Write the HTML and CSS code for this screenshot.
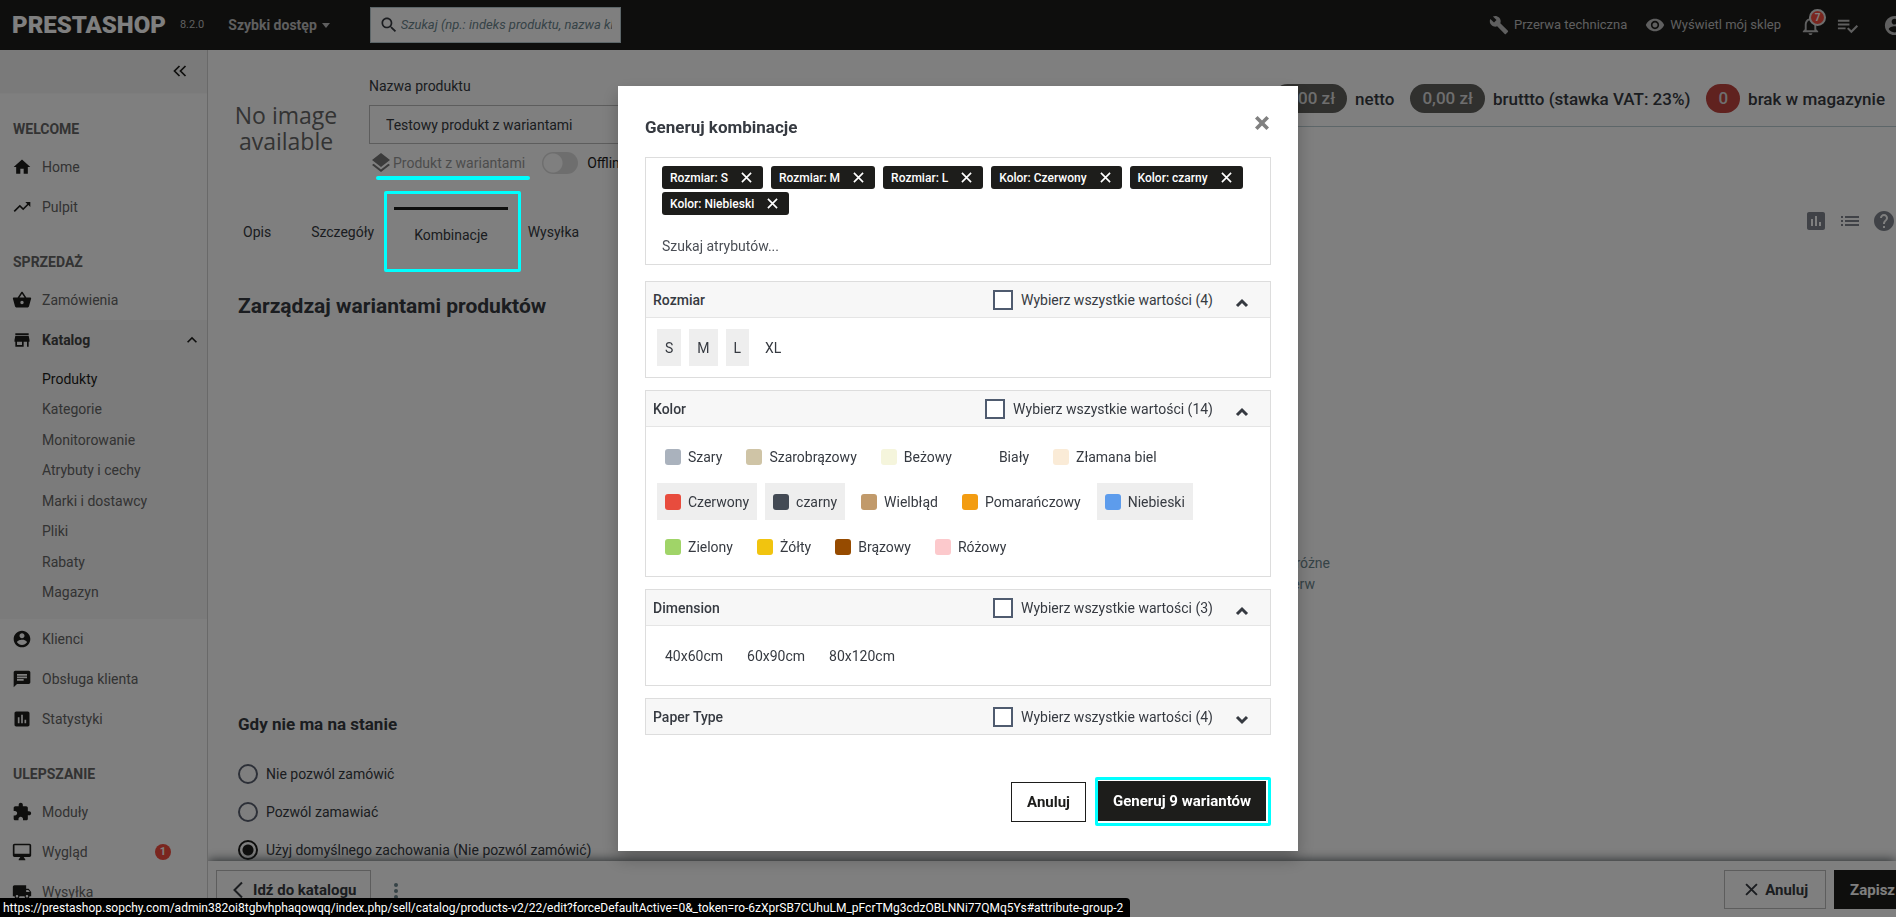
FILE: index.html
```
<!DOCTYPE html>
<html lang="pl">
<head>
<meta charset="utf-8">
<title>Produkty • PrestaShop</title>
<link rel="stylesheet" href="styles.css">
</head>
<body>
<svg class="sprite" aria-hidden="true">
  <symbol id="i-home" viewBox="0 0 24 24"><path d="M10 20v-6h4v6h5v-8h3L12 3 2 12h3v8z"/></symbol>
  <symbol id="i-trend" viewBox="0 0 24 24"><path d="M16 6l2.29 2.29-4.88 4.88-4-4L2 16.59 3.41 18l6-6 4 4 6.3-6.29L22 12V6z"/></symbol>
  <symbol id="i-basket" viewBox="0 0 24 24"><path d="M17.21 9l-4.38-6.56c-.19-.28-.51-.42-.83-.42-.32 0-.64.14-.83.43L6.79 9H2c-.55 0-1 .45-1 1 0 .09.01.18.04.27l2.54 9.27c.23.84 1 1.46 1.92 1.46h13c.92 0 1.69-.62 1.93-1.46l2.54-9.27L23 10c0-.55-.45-1-1-1h-4.79zM9 9l3-4.4L15 9H9zm3 8c-1.1 0-2-.9-2-2s.9-2 2-2 2 .9 2 2-.9 2-2 2z"/></symbol>
  <symbol id="i-store" viewBox="0 0 24 24"><path d="M20 4H4v2h16V4zm1 10v-2l-1-5H4l-1 5v2h1v6h10v-6h4v6h2v-6h1zm-9 4H6v-4h6v4z"/></symbol>
  <symbol id="i-account" viewBox="0 0 24 24"><path d="M12 2C6.48 2 2 6.48 2 12s4.48 10 10 10 10-4.48 10-10S17.52 2 12 2zm0 3c1.66 0 3 1.34 3 3s-1.34 3-3 3-3-1.34-3-3 1.34-3 3-3zm0 14.2c-2.5 0-4.71-1.28-6-3.22.03-1.99 4-3.08 6-3.08 1.99 0 5.97 1.09 6 3.08-1.29 1.94-3.5 3.22-6 3.22z"/></symbol>
  <symbol id="i-chat" viewBox="0 0 24 24"><path d="M20 2H4c-1.1 0-1.99.9-1.99 2L2 22l4-4h14c1.1 0 2-.9 2-2V4c0-1.1-.9-2-2-2zM6 9h12v2H6V9zm8 5H6v-2h8v2zm4-6H6V6h12v2z"/></symbol>
  <symbol id="i-chart" viewBox="0 0 24 24"><path d="M19 3H5c-1.1 0-2 .9-2 2v14c0 1.1.9 2 2 2h14c1.1 0 2-.9 2-2V5c0-1.1-.9-2-2-2zM9 17H7v-7h2v7zm4 0h-2V7h2v10zm4 0h-2v-4h2v4z"/></symbol>
  <symbol id="i-module" viewBox="0 0 24 24"><path d="M20.5 11H19V7c0-1.1-.9-2-2-2h-4V3.5C13 2.12 11.88 1 10.5 1S8 2.12 8 3.5V5H4c-1.1 0-1.99.9-1.99 2v3.8H3.5c1.49 0 2.7 1.21 2.7 2.7s-1.21 2.7-2.7 2.7H2V20c0 1.1.9 2 2 2h3.8v-1.5c0-1.49 1.21-2.7 2.7-2.7 1.49 0 2.7 1.21 2.7 2.7V22H17c1.1 0 2-.9 2-2v-4h1.5c1.38 0 2.5-1.12 2.5-2.5S21.88 11 20.5 11z"/></symbol>
  <symbol id="i-desktop" viewBox="0 0 24 24"><path d="M21 2H3c-1.1 0-2 .9-2 2v12c0 1.1.9 2 2 2h7l-2 3v1h8v-1l-2-3h7c1.1 0 2-.9 2-2V4c0-1.1-.9-2-2-2zm0 12H3V4h18v10z"/></symbol>
  <symbol id="i-truck" viewBox="0 0 24 24"><path d="M20 8h-3V4H3c-1.1 0-2 .9-2 2v11h2c0 1.66 1.34 3 3 3s3-1.34 3-3h6c0 1.66 1.34 3 3 3s3-1.34 3-3h2v-5l-3-4zM6 18.5c-.83 0-1.5-.67-1.5-1.5s.67-1.5 1.5-1.5 1.5.67 1.5 1.5-.67 1.5-1.5 1.5zm13.5-9l1.96 2.5H17V9.5h2.5zm-1.5 9c-.83 0-1.5-.67-1.5-1.5s.67-1.5 1.5-1.5 1.5.67 1.5 1.5-.67 1.5-1.5 1.5z"/></symbol>
  <symbol id="i-wrench" viewBox="0 0 24 24"><path d="M22.7 19l-9.1-9.1c.9-2.3.4-5-1.5-6.9-2-2-5-2.4-7.4-1.3L9 6 6 9 1.6 4.7C.4 7.1.9 10.1 2.9 12.1c1.9 1.9 4.6 2.4 6.9 1.5l9.1 9.1c.4.4 1 .4 1.4 0l2.3-2.3c.5-.4.5-1.1.1-1.4z"/></symbol>
  <symbol id="i-eye" viewBox="0 0 24 24"><path d="M12 4.5C7 4.5 2.73 7.61 1 12c1.73 4.39 6 7.5 11 7.5s9.27-3.11 11-7.5c-1.73-4.39-6-7.5-11-7.5zM12 17c-2.76 0-5-2.24-5-5s2.24-5 5-5 5 2.24 5 5-2.24 5-5 5zm0-8c-1.66 0-3 1.34-3 3s1.34 3 3 3 3-1.34 3-3-1.34-3-3-3z"/></symbol>
  <symbol id="i-bell" viewBox="0 0 24 24"><path d="M12 22c1.1 0 2-.9 2-2h-4c0 1.1.9 2 2 2zm6-6v-5c0-3.07-1.63-5.64-4.5-6.32V4c0-.83-.67-1.5-1.5-1.5s-1.5.67-1.5 1.5v.68C7.64 5.36 6 7.92 6 11v5l-2 2v1h16v-1l-2-2zm-2 1H8v-6c0-2.48 1.51-4.5 4-4.5s4 2.02 4 4.5v6z"/></symbol>
  <symbol id="i-playlist" viewBox="0 0 24 24"><path d="M14 10H2v2h12v-2zm0-4H2v2h12V6zM2 16h8v-2H2v2zm19.5-4.5L23 13l-6.99 7-4.51-4.5L13 14l3.01 3 5.49-5.5z"/></symbol>
  <symbol id="i-search" viewBox="0 0 24 24"><path d="M15.5 14h-.79l-.28-.27C15.41 12.59 16 11.11 16 9.5 16 5.91 13.09 3 9.5 3S3 5.91 3 9.5 5.91 16 9.5 16c1.61 0 3.09-.59 4.23-1.57l.27.28v.79l5 4.99L20.49 19l-4.99-5zm-6 0C7.01 14 5 11.99 5 9.5S7.01 5 9.5 5 14 7.01 14 9.5 11.99 14 9.5 14z"/></symbol>
  <symbol id="i-layers" viewBox="0 0 24 24"><path d="M11.99 18.54l-7.37-5.73L3 14.07l9 7 9-7-1.63-1.27-7.38 5.74zM12 16l7.36-5.73L21 9l-9-7-9 7 1.63 1.27L12 16z"/></symbol>
  <symbol id="i-list" viewBox="0 0 24 24"><path d="M3 13h2v-2H3v2zm0 4h2v-2H3v2zm0-8h2V7H3v2zm4 4h14v-2H7v2zm0 4h14v-2H7v2zM7 7v2h14V7H7z"/></symbol>
  <symbol id="i-help" viewBox="0 0 24 24"><path d="M12 2C6.48 2 2 6.48 2 12s4.48 10 10 10 10-4.48 10-10S17.52 2 12 2zm1 17h-2v-2h2v2zm2.07-7.75l-.9.92C13.45 12.9 13 13.5 13 15h-2v-.5c0-1.1.45-2.1 1.17-2.83l1.24-1.26c.37-.36.59-.86.59-1.41 0-1.1-.9-2-2-2s-2 .9-2 2H8c0-2.21 1.79-4 4-4s4 1.79 4 4c0 .88-.36 1.68-.93 2.25z"/></symbol>
  <symbol id="i-collapse" viewBox="0 0 14 12"><path d="M6.5 1 1.5 6l5 5M12.500 1 7.500 6l5 5" fill="none" stroke="currentColor" stroke-width="1.700"/></symbol>
  <symbol id="i-up" viewBox="0 0 24 24"><path d="M12 8l-6 6 1.410 1.410L12 10.830l4.590 4.580L18 14z"/></symbol>
  <symbol id="i-chev" viewBox="0 0 14 10"><path d="M2 8l5-5 5 5" fill="none" stroke="currentColor" stroke-width="3"/></symbol>
  <symbol id="i-back" viewBox="0 0 10 18"><path d="M9 1.500 1.500 9 9 16.500" fill="none" stroke="currentColor" stroke-width="2"/></symbol>
  <symbol id="i-x" viewBox="0 0 12 12"><path d="M1 1l10 10M11 1 1 11" fill="none" stroke="currentColor" stroke-width="1.800"/></symbol>
</svg>

<div class="app">
  <header class="topbar">
    <a class="logo" href="#">PRESTASHOP</a>
    <span class="version">8.2.0</span>
    <button class="quick" type="button">Szybki dostęp</button>
    <label class="search">
      <svg><use href="#i-search"/></svg>
      <input type="text" aria-label="Szukaj" placeholder="Szukaj (np.: indeks produktu, nazwa klienta)">
    </label>
    <nav class="toplinks">
      <a class="toplink" href="#"><svg><use href="#i-wrench"/></svg>Przerwa techniczna</a>
      <a class="toplink" href="#"><svg><use href="#i-eye"/></svg>Wyświetl mój sklep</a>
      <button class="topicon bell" type="button" aria-label="Powiadomienia"><svg><use href="#i-bell"/></svg><span class="count">7</span></button>
      <button class="topicon" type="button" aria-label="Zadania"><svg><use href="#i-playlist"/></svg></button>
      <button class="topicon user" type="button" aria-label="Konto"><svg><use href="#i-account"/></svg></button>
    </nav>
  </header>

  <div class="body">
    <aside class="sidebar">
      <div class="fold"><button type="button" aria-label="Zwiń menu"><svg><use href="#i-collapse"/></svg></button></div>
      <h4 class="nav-title">WELCOME</h4>
      <a class="nav-item" href="#"><svg><use href="#i-home"/></svg>Home</a>
      <a class="nav-item" href="#"><svg><use href="#i-trend"/></svg>Pulpit</a>
      <h4 class="nav-title">SPRZEDAŻ</h4>
      <a class="nav-item" href="#"><svg><use href="#i-basket"/></svg>Zamówienia</a>
      <div class="nav-open">
        <a class="nav-item current" href="#"><svg><use href="#i-store"/></svg>Katalog<svg class="arrow"><use href="#i-up"/></svg></a>
        <div class="subnav">
          <a class="on" href="#">Produkty</a>
          <a href="#">Kategorie</a>
          <a href="#">Monitorowanie</a>
          <a href="#">Atrybuty i cechy</a>
          <a href="#">Marki i dostawcy</a>
          <a href="#">Pliki</a>
          <a href="#">Rabaty</a>
          <a href="#">Magazyn</a>
        </div>
      </div>
      <a class="nav-item" href="#"><svg><use href="#i-account"/></svg>Klienci</a>
      <a class="nav-item" href="#"><svg><use href="#i-chat"/></svg>Obsługa klienta</a>
      <a class="nav-item" href="#"><svg><use href="#i-chart"/></svg>Statystyki</a>
      <h4 class="nav-title">ULEPSZANIE</h4>
      <a class="nav-item" href="#"><svg><use href="#i-module"/></svg>Moduły</a>
      <a class="nav-item" href="#"><svg><use href="#i-desktop"/></svg>Wygląd<span class="badge">1</span></a>
      <a class="nav-item" href="#"><svg><use href="#i-truck"/></svg>Wysyłka</a>
    </aside>

    <main class="main">
      <div class="content">
        <section class="product">
          <div class="preview">No image available</div>
          <div class="naming">
            <label for="name">Nazwa produktu</label>
            <input id="name" type="text" value="Testowy produkt z wariantami">
            <div class="status">
              <svg><use href="#i-layers"/></svg>
              <span class="kind">Produkt z wariantami</span>
              <label class="online"><input type="checkbox" role="switch">Offline</label>
            </div>
          </div>
          <div class="summary">
            <span class="pill">0,00 zł</span>netto
            <span class="pill">0,00 zł</span>bruttto (stawka VAT: 23%)
            <span class="pill red">0</span>brak w magazynie
          </div>
        </section>

        <div class="tabrow">
          <nav class="tabs">
            <a href="#">Opis</a>
            <a href="#">Szczegóły</a>
            <a class="active" href="#">Kombinacje</a>
            <a href="#">Wysyłka</a>
          </nav>
          <div class="tools">
            <button type="button" aria-label="Statystyki"><svg><use href="#i-chart"/></svg></button>
            <button type="button" aria-label="Lista"><svg><use href="#i-list"/></svg></button>
            <button type="button" aria-label="Pomoc"><svg><use href="#i-help"/></svg></button>
          </div>
        </div>

        <h2>Zarządzaj wariantami produktów</h2>
        <div class="empty"><p>przyjmujące różne</p><p class="second">musisz najpierw</p></div>

        <h3>Gdy nie ma na stanie</h3>
        <div class="radios">
          <label><input type="radio" name="oos">Nie pozwól zamówić</label>
          <label><input type="radio" name="oos">Pozwól zamawiać</label>
          <label><input type="radio" name="oos" checked>Użyj domyślnego zachowania (Nie pozwól zamówić)</label>
        </div>
      </div>

      <footer class="actions">
        <a class="btn back" href="#"><svg><use href="#i-back"/></svg>Idź do katalogu</a>
        <button class="dots" type="button" aria-label="Więcej"><i></i><i></i><i></i></button>
        <button class="btn cancel" type="button"><svg><use href="#i-x"/></svg>Anuluj</button>
        <button class="btn save" type="button">Zapisz</button>
      </footer>
    </main>
  </div>
</div>

<div class="backdrop">
  <div class="modal" role="dialog" aria-modal="true" aria-labelledby="modal-title">
    <div class="modal-head">
      <h1 id="modal-title">Generuj kombinacje</h1>
      <button class="close" type="button" aria-label="Zamknij"><svg viewBox="0 0 14 14"><path d="M2 2l10 10M12 2 2 12" fill="none" stroke="currentColor" stroke-width="3.200"/></svg></button>
    </div>

    <div class="picker">
      <div class="chips">
        <span class="chip">Rozmiar: S<button type="button" aria-label="Usuń"><svg><use href="#i-x"/></svg></button></span>
        <span class="chip">Rozmiar: M<button type="button" aria-label="Usuń"><svg><use href="#i-x"/></svg></button></span>
        <span class="chip">Rozmiar: L<button type="button" aria-label="Usuń"><svg><use href="#i-x"/></svg></button></span>
        <span class="chip">Kolor: Czerwony<button type="button" aria-label="Usuń"><svg><use href="#i-x"/></svg></button></span>
        <span class="chip">Kolor: czarny<button type="button" aria-label="Usuń"><svg><use href="#i-x"/></svg></button></span>
        <span class="chip">Kolor: Niebieski<button type="button" aria-label="Usuń"><svg><use href="#i-x"/></svg></button></span>
      </div>
      <input type="text" aria-label="Szukaj atrybutów" placeholder="Szukaj atrybutów...">
    </div>

    <div class="groups">
      <section class="group">
        <div class="group-head"><h5>Rozmiar</h5><label><input type="checkbox">Wybierz wszystkie wartości (4)</label><button type="button" aria-label="Zwiń"><svg><use href="#i-chev"/></svg></button></div>
        <div class="values">
          <button class="value on" type="button">S</button>
          <button class="value on" type="button">M</button>
          <button class="value on" type="button">L</button>
          <button class="value" type="button">XL</button>
        </div>
      </section>

      <section class="group">
        <div class="group-head"><h5>Kolor</h5><label><input type="checkbox">Wybierz wszystkie wartości (14)</label><button type="button" aria-label="Zwiń"><svg><use href="#i-chev"/></svg></button></div>
        <div class="values">
          <button class="value" type="button"><i style="background:#aab2bd"></i>Szary</button>
          <button class="value" type="button"><i style="background:#cfc4a6"></i>Szarobrązowy</button>
          <button class="value" type="button"><i style="background:#f5f5dc"></i>Beżowy</button>
          <button class="value" type="button"><i style="background:#ffffff"></i>Biały</button>
          <button class="value" type="button"><i style="background:#faebd7"></i>Złamana biel</button>
          <button class="value on" type="button"><i style="background:#e84c3d"></i>Czerwony</button>
          <button class="value on" type="button"><i style="background:#434a54"></i>czarny</button>
          <button class="value" type="button"><i style="background:#c19a6b"></i>Wielbłąd</button>
          <button class="value" type="button"><i style="background:#f39c11"></i>Pomarańczowy</button>
          <button class="value on" type="button"><i style="background:#5d9cec"></i>Niebieski</button>
          <button class="value" type="button"><i style="background:#a0d468"></i>Zielony</button>
          <button class="value" type="button"><i style="background:#f1c40f"></i>Żółty</button>
          <button class="value" type="button"><i style="background:#964b00"></i>Brązowy</button>
          <button class="value" type="button"><i style="background:#fcc9cc"></i>Różowy</button>
        </div>
      </section>

      <section class="group">
        <div class="group-head"><h5>Dimension</h5><label><input type="checkbox">Wybierz wszystkie wartości (3)</label><button type="button" aria-label="Zwiń"><svg><use href="#i-chev"/></svg></button></div>
        <div class="values">
          <button class="value" type="button">40x60cm</button>
          <button class="value" type="button">60x90cm</button>
          <button class="value" type="button">80x120cm</button>
        </div>
      </section>

      <section class="group closed">
        <div class="group-head"><h5>Paper Type</h5><label><input type="checkbox">Wybierz wszystkie wartości (4)</label><button type="button" aria-label="Rozwiń"><svg><use href="#i-chev"/></svg></button></div>
      </section>
    </div>

    <div class="modal-foot">
      <button class="mbtn" type="button">Anuluj</button>
      <span class="marked"><button class="mbtn dark" type="button">Generuj 9 wariantów</button></span>
    </div>
  </div>
</div>

<div class="mark underline"></div>
<div class="mark frame"></div>
<div class="statusbar">https://prestashop.sopchy.com/admin382oi8tgbvhphaqowqq/index.php/sell/catalog/products-v2/22/edit?forceDefaultActive=0&amp;_token=ro-6zXprSB7CUhuLM_pFcrTMg3cdzOBLNNi77QMq5Ys#attribute-group-2</div>
</body>
</html>
```
FILE: styles.css
```
* { box-sizing: border-box; }
html, body { height: 100%; margin: 0; overflow: hidden; }
body { font: 14px/20px Roboto, "Open Sans", sans-serif; color: #363a41; background: #fff; }
h1, h2, h3, h4, h5, p { margin: 0; }
a { color: inherit; text-decoration: none; }
button, input { font: inherit; color: inherit; }
button { border: 0; padding: 0; background: none; cursor: pointer; }
input { outline: 0; margin: 0; }
svg { display: block; flex: none; width: 20px; height: 20px; fill: currentColor; }
.sprite { position: absolute; width: 0; height: 0; }

.app { display: flex; flex-direction: column; height: 100vh; overflow: hidden; }
.body { display: flex; flex: 1; min-height: 0; }

/* Top bar */
.topbar { display: flex; align-items: center; flex: none; height: 50px; padding-left: 12px; overflow: hidden; background: #1d1d1b; color: #bebebe; }
.logo { color: #fff; font-size: 24px; font-weight: 900; }
.version { margin-left: 14px; font-size: 11px; }
.quick { display: flex; align-items: center; gap: 5px; margin-left: 24px; font-weight: 700; }
.quick::after { content: ""; border: 4px solid transparent; border-top: 5px solid currentColor; border-bottom: 0; }
.search { display: flex; align-items: center; gap: 2px; width: 251px; height: 36px; margin-left: 40px; padding: 0 8px; background: #fff; border: 1px solid #bbcdd2; color: #363a41; }
.search input { flex: 1; min-width: 0; border: 0; padding: 0; background: none; font-size: 13px; font-style: italic; }
.search input::placeholder { color: #6c868e; opacity: 1; }
.toplinks { display: flex; align-items: center; margin: 0 -10px 0 auto; }
.toplink { display: flex; align-items: center; gap: 5px; margin-right: 18px; font-size: 13px; }
.topicon { position: relative; margin-right: 14px; }
.topicon svg { width: 23px; height: 23px; }
.topicon.user { margin: 0 0 0 10px; }
.count { position: absolute; top: -5px; right: -4px; width: 17px; height: 17px; border: 2px solid #ddd; border-radius: 50%; background: #f54c3e; color: #fff; font-size: 10px; line-height: 13px; font-weight: 700; }

/* Side menu */
.sidebar { flex: none; width: 208px; overflow: hidden; border-right: 1px solid #d3d3d3; color: #666; }
.fold { display: flex; align-items: center; justify-content: flex-end; height: 44px; padding: 0 20px 2px 0; background: #f4f4f4; color: #1d1d1b; border-bottom: 1px solid #fafafa; }
.fold svg { width: 14px; height: 12px; }
.nav-title { height: 36px; margin-top: 17px; padding-left: 13px; font-size: 14px; line-height: 36px; font-weight: 700; }
.nav-item { display: flex; align-items: center; gap: 10px; height: 40px; padding: 0 5px 0 12px; }
.nav-item svg { color: #1d1d1b; }
.nav-item .arrow { margin-left: auto; width: 20px; height: 20px; }
.nav-open { background: #f6f6f6; }
.current { color: #444; font-weight: 700; }
.subnav { display: flex; flex-direction: column; justify-content: space-between; height: 259px; padding: 9px 0 17px 42px; }
.subnav .on { color: #1d1d1b; }
.badge { margin: 0 31px 0 auto; width: 16px; height: 16px; border-radius: 50%; background: #f54c3e; color: #fff; font-size: 11px; line-height: 16px; font-weight: 700; text-align: center; }

/* Product page */
.main { display: flex; flex-direction: column; flex: 1; min-width: 0; }
.content { flex: 1; min-height: 0; overflow: hidden; }
.product { display: flex; padding: 26px 0 0 25px; }
.preview { flex: none; width: 106px; margin: 26px 30px 0 0; font: 23px/26px "Open Sans", sans-serif; color: #666; text-align: center; }
.naming { flex: none; width: 500px; }
.naming > label { display: block; }
.naming > input { display: block; width: 100%; height: 39px; margin-top: 9px; padding: 0 16px; border: 1px solid #bbb; background: #fff; }
.status { display: flex; align-items: center; height: 22px; margin-top: 8px; }
.status svg { width: 24px; height: 24px; color: #777; }
.kind { color: #999; }
.online { display: flex; align-items: center; gap: 9px; margin-left: 17px; color: #1d1d1b; }
.online input { appearance: none; width: 36px; height: 22px; border-radius: 11px; background: radial-gradient(circle at 11px 11px, #fff 9px, #ddd 10px); }
.summary { display: flex; align-items: center; align-self: flex-start; gap: 8px; margin-left: auto; padding: 8px 11px 13px 0; border-bottom: 1px solid #bbcdd2; font-size: 17px; font-weight: 500; white-space: nowrap; }
.pill { height: 29px; padding: 0 12px; border-radius: 15px; background: #60605c; color: #ddd; line-height: 29px; }
.pill:not(:first-child) { margin-left: 8px; }
.pill.red { background: #c0443f; }
.tabrow { display: flex; justify-content: space-between; margin-top: 33px; padding-left: 15px; }
.tabs { display: flex; height: 53px; }
.tabs a { padding: 15px 20px; }
.tabs .active { border-top: 3px solid #1d1d1b; }
.tools { display: flex; align-items: flex-start; gap: 10px; padding-top: 2px; color: #80858e; }
.tools svg { width: 24px; height: 24px; }
h2 { margin: 32px 0 0 30px; font-size: 21px; line-height: 28px; font-weight: 700; }
h3 { margin: 117px 0 0 30px; font-size: 17px; line-height: 24px; font-weight: 700; }
.empty { width: 536px; margin: 233px 0 0 586px; line-height: 21px; color: #6c868e; text-align: right; }
.second { padding-right: 15px; }
.radios { margin: 19px 0 0 30px; }
.radios label { display: flex; align-items: center; gap: 8px; height: 38px; }
.radios input { appearance: none; width: 20px; height: 20px; border: 2px solid #5a6070; border-radius: 50%; background: #fff; }
.radios input:checked { border-color: #1d1d1b; background: radial-gradient(circle, #1d1d1b 5px, #fff 6px); }

.actions { display: flex; align-items: flex-start; flex: none; position: relative; height: 56px; padding: 9px 0 0 8px; background: #fff; box-shadow: 0 -1px 10px rgba(40, 50, 55, .8); clip-path: inset(-20px 0 0 0); }
.btn { display: flex; align-items: center; height: 39px; border: 1px solid #bbb; font-size: 15px; font-weight: 700; background: #fff; }
.back { gap: 10px; width: 155px; padding-left: 16px; }
.back svg { width: 10px; height: 18px; }
.dots { display: flex; flex-direction: column; gap: 2px; margin: 13px 0 0 23px; }
.dots i { width: 4px; height: 4px; border-radius: 50%; background: #6c868e; }
.cancel { gap: 7px; margin-left: auto; padding: 0 17px 0 20px; }
.cancel svg { width: 13px; height: 13px; }
.save { margin-left: 8px; padding: 0 1px 0 16px; background: #1d1d1b; border: 0; color: #fff; }

/* Combination generator */
.backdrop { position: fixed; inset: 0; display: flex; align-items: flex-start; justify-content: center; padding: 86px 0 0 20px; background: rgba(0, 0, 0, .5); }
.modal { width: 680px; padding: 27px 27px 25px; background: #fff; box-shadow: 0 8px 16px rgba(0, 0, 0, .25); }
.modal-head { display: flex; justify-content: space-between; height: 28px; }
.modal-head h1 { font-size: 17px; line-height: 28px; font-weight: 700; }
.close { align-self: flex-start; margin: 2px 1px 0 0; color: #808080; }
.close svg { width: 16px; height: 16px; }
.picker { margin-top: 16px; padding: 8px 16px 8px; border: 1px solid #ddd; }
.chips { display: flex; flex-wrap: wrap; gap: 3px 8px; }
.chip { display: flex; align-items: center; gap: 13px; height: 23px; padding: 0 11px 0 8px; border-radius: 3px; background: #1d1d1b; color: #fff; font-size: 12px; font-weight: 500; }
.chip svg { width: 11px; height: 11px; }
.picker > input { display: block; width: 100%; height: 20px; margin-top: 21px; border: 0; padding: 0; }
.picker > input::placeholder { color: #4a4e55; opacity: 1; }

.groups { display: grid; gap: 12px; margin-top: 16px; }
.group { border: 1px solid #ddd; }
.group-head { display: flex; align-items: center; height: 36px; padding: 0 21px 0 7px; background: #f7f7f7; border-bottom: 1px solid #e5e5e5; }
.group-head h5 { flex: 1; font-size: 14px; line-height: 20px; font-weight: 500; }
.group-head label { display: flex; align-items: center; gap: 8px; }
.group-head input { appearance: none; width: 20px; height: 20px; border: 2px solid #4f5b6f; background: #fff; }
.group-head button { margin: 6px 0 0 22px; }
.group-head svg { width: 14px; height: 10px; }
.closed .group-head { height: 35px; border-bottom: 0; }
.closed svg { transform: rotate(180deg); }
.values { display: flex; flex-wrap: wrap; gap: 8px; padding: 11px; }
.value { display: flex; align-items: center; gap: 7px; height: 37px; padding: 0 8px; }
.value.on { background: #eee; }
.value i { width: 16px; height: 16px; border-radius: 3px; }

.modal-foot { display: flex; align-items: center; justify-content: flex-end; gap: 9px; margin-top: 42px; }
.mbtn { height: 40px; padding: 0 15px; border: 1px solid #1d1d1b; background: #fff; color: #1d1d1b; font-size: 15px; font-weight: 700; }
.mbtn.dark { padding: 0 14px; background: #1d1d1b; color: #fff; }
.marked { display: flex; padding: 1px 2px 2px 0; border: 3px solid #0ff; border-radius: 2px; }

/* Highlight marks and browser status bubble */
.mark { position: fixed; pointer-events: none; }
.underline { left: 376px; top: 176px; width: 154px; height: 4px; border-radius: 2px; background: #0ff; }
.frame { left: 384px; top: 191px; width: 137px; height: 81px; border: 3px solid #0ff; border-radius: 2px; }
.statusbar { position: fixed; left: 0; bottom: 0; height: 19px; padding: 0 7px 0 3px; border-radius: 0 4px 0 0; background: #000; color: #fff; font-size: 12px; line-height: 20px; white-space: nowrap; }
```
